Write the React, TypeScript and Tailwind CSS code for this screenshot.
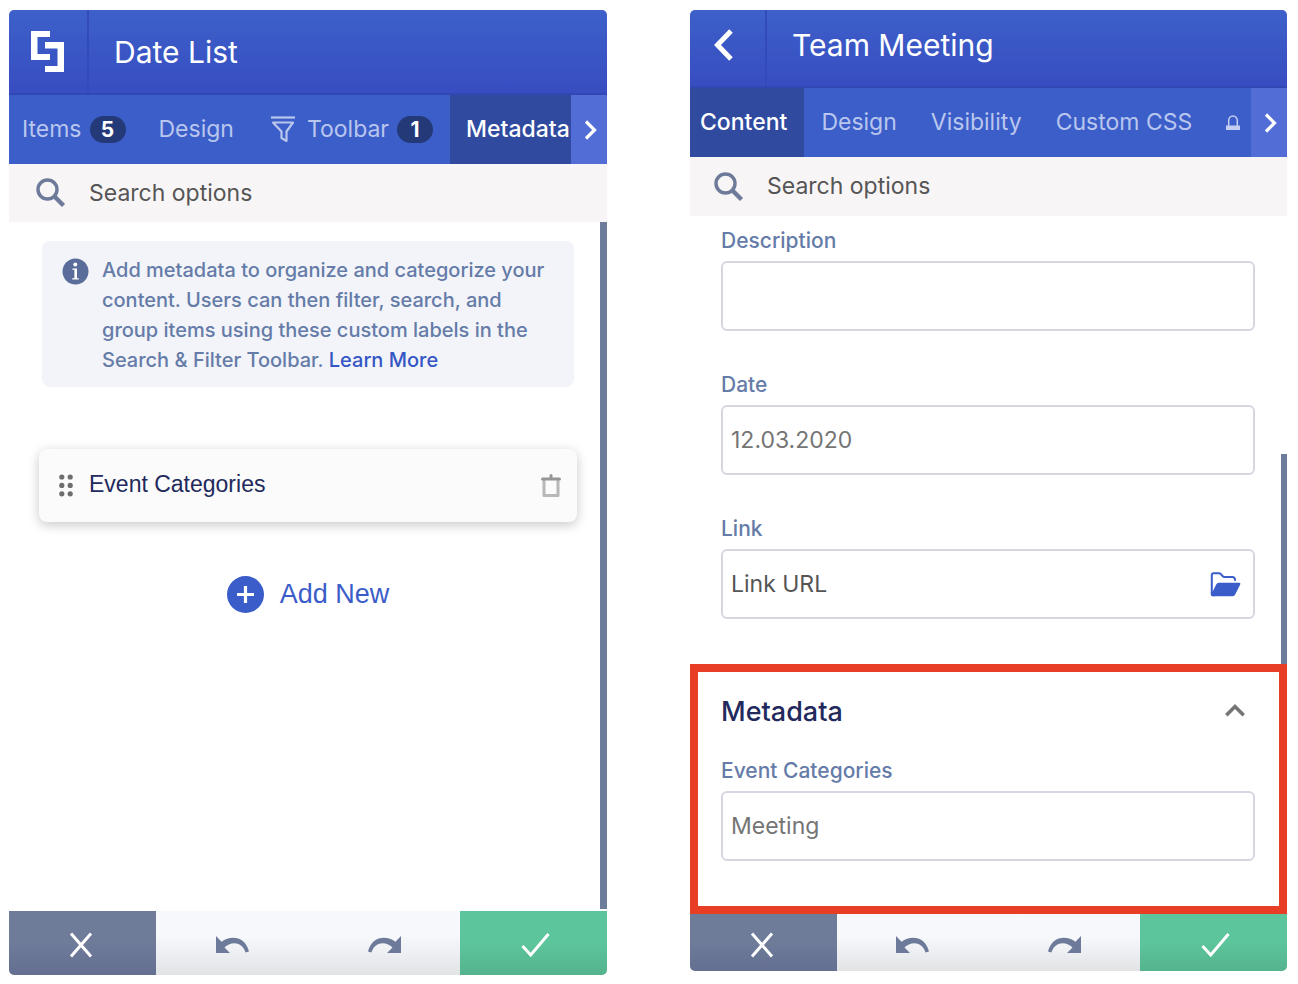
import type { ReactNode } from "react";

function LogoIcon() {
  return (
    <svg width="34" height="42" viewBox="0 0 34 42" fill="#fff" aria-hidden="true">
      <path d="M0 0h19v6H6.500v17H19v6H0z" />
      <path d="M14 11h19v30H14v-6h12.500V17.500H14z" />
    </svg>
  );
}

function BackIcon() {
  return (
    <svg width="20" height="32" viewBox="0 0 20 32" fill="none" stroke="#fff" strokeWidth="5" aria-hidden="true">
      <path d="M17 2 3.500 16 17 30" />
    </svg>
  );
}

function NextIcon() {
  return (
    <svg width="14" height="20" viewBox="0 0 14 20" fill="none" stroke="#fff" strokeWidth="3.200" aria-hidden="true">
      <path d="M2 1.500 10.500 10 2 18.500" />
    </svg>
  );
}

function SearchIcon() {
  return (
    <svg width="30" height="30" viewBox="0 0 30 30" fill="none" stroke="#6d7a99" aria-hidden="true">
      <circle cx="11.500" cy="11.500" r="9.500" strokeWidth="3.400" />
      <path d="M19 19l8.500 8.500" strokeWidth="4.400" />
    </svg>
  );
}

function FilterIcon() {
  return (
    <svg width="24" height="27" viewBox="0 0 24 27" fill="none" stroke="#b9c6ee" strokeWidth="2.200" aria-hidden="true">
      <path d="M0 1.500h24" />
      <path d="M2 6.500h20l-6.500 9v9.500l-5-3V15.500z" strokeLinejoin="round" />
    </svg>
  );
}

function LockIcon() {
  return (
    <svg width="14" height="15" viewBox="0 0 14 15" aria-hidden="true">
      <path d="M2.700 11V5.600a4.300 4.600 0 0 1 8.600 0V11" fill="none" stroke="#c3cef0" strokeWidth="1.500" />
      <path d="M0 10.500h14V15H0z" fill="#c3cef0" />
    </svg>
  );
}

function InfoIcon() {
  return (
    <svg className="shrink-0" width="27" height="27" viewBox="0 0 27 27" aria-hidden="true">
      <circle cx="13.500" cy="13.500" r="13" fill="#5a6c99" />
      <circle cx="13.300" cy="6.600" r="2" fill="#fff" />
      <path d="M10.400 10.500h4.600v9.700h1.800v1.300h-6.600v-1.300h2.200v-8.400h-2z" fill="#fff" />
    </svg>
  );
}

function GripIcon() {
  return (
    <svg width="14" height="23" viewBox="0 0 14 23" fill="#6e6e6e" aria-hidden="true">
      <circle cx="2.800" cy="3" r="2.600" />
      <circle cx="11.200" cy="3" r="2.600" />
      <circle cx="2.800" cy="11.400" r="2.600" />
      <circle cx="11.200" cy="11.400" r="2.600" />
      <circle cx="2.800" cy="19.800" r="2.600" />
      <circle cx="11.200" cy="19.800" r="2.600" />
    </svg>
  );
}

function TrashIcon() {
  return (
    <svg width="20" height="24" viewBox="0 0 20 24" fill="none" aria-hidden="true">
      <path d="M3 6v15.500h14V6" stroke="#b8b8b8" strokeWidth="3" strokeLinejoin="round" />
      <path d="M1.500 5h17M10 1.500V5" stroke="#969696" strokeWidth="3" strokeLinecap="round" />
    </svg>
  );
}

function PlusCircleIcon() {
  return (
    <svg width="37" height="37" viewBox="0 0 37 37" aria-hidden="true">
      <circle cx="18.500" cy="18.500" r="18.500" fill="#3b5dc9" />
      <path d="M18.500 10v17M10 18.500h17" stroke="#fff" strokeWidth="3.200" />
    </svg>
  );
}

function FolderIcon() {
  return (
    <svg width="31" height="25" viewBox="0 0 31 25" aria-hidden="true">
      <path
        d="M1.800 21V3.200q0-1.900 1.900-1.900h5.200q1.200 0 2 .9l1.600 1.800q.8.900 2 .9h8q2.300 0 2.500 2.600v1.300"
        fill="none"
        stroke="#3b5dc9"
        strokeWidth="2"
      />
      <path
        d="M8.600 10.800h20.600q1.800 0 1 1.600l-5 10.200q-.8 1.600-2.600 1.600H3q-2.200 0-1.800-1.600L6.200 12.400q.8-1.600 2.400-1.600z"
        fill="#3b5dc9"
      />
      <path d="M.8 20v2.300q0 1.900 1.900 1.900h2V20z" fill="#3b5dc9" />
    </svg>
  );
}

function ChevronUpIcon() {
  return (
    <svg width="20" height="13" viewBox="0 0 20 13" fill="none" stroke="#757575" strokeWidth="3.600" aria-hidden="true">
      <path d="M1.300 11.300 10 2.600l8.700 8.700" />
    </svg>
  );
}

function CloseIcon() {
  return (
    <svg width="24" height="26" viewBox="0 0 24 26" fill="none" stroke="#fff" strokeWidth="3" aria-hidden="true">
      <path d="M2 1.500l20 23M22 1.500l-20 23" />
    </svg>
  );
}

function UndoIcon() {
  return (
    <svg width="33" height="18" viewBox="0 0 33 18" aria-hidden="true">
      <path d="M0 0v17h14l-5.500-5.500C14 5.500 26 4.500 29.500 16.500l3.500-1C29.500.5 15-1.500 5.500 5.700z" fill="#6d7a99" />
    </svg>
  );
}

function RedoIcon() {
  return (
    <svg width="33" height="18" viewBox="0 0 33 18" aria-hidden="true">
      <path d="M33 0v17H19l5.500-5.500C19 5.500 7 4.500 3.500 16.500l-3.500-1C3.500.5 18-1.500 27.500 5.700z" fill="#6d7a99" />
    </svg>
  );
}

function CheckIcon() {
  return (
    <svg width="29" height="26" viewBox="0 0 29 26" fill="none" stroke="#fff" strokeWidth="3" aria-hidden="true">
      <path d="M1.500 14l8.200 9L27.500 2" />
    </svg>
  );
}

function Badge({ children }: { children: ReactNode }) {
  return (
    <span className="flex h-[27px] w-[36px] items-center justify-center rounded-full bg-[#243a78] text-[21px] font-bold text-white">
      {children}
    </span>
  );
}

function NextTabs() {
  return (
    <button
      type="button"
      aria-label="More tabs"
      className="flex w-9 shrink-0 items-center justify-center bg-[#526dd6] pl-1"
    >
      <NextIcon />
    </button>
  );
}

function SearchBar({ id, compact }: { id: string; compact?: boolean }) {
  return (
    <div
      className={
        compact
          ? "flex h-[59px] items-center gap-[23px] bg-[#f8f5f6] pl-6"
          : "flex h-[58px] items-center gap-[23px] bg-[#f8f5f6] pl-[27px]"
      }
    >
      <label htmlFor={id} aria-label="Search options">
        <SearchIcon />
      </label>
      <input
        id={id}
        type="text"
        placeholder="Search options"
        className="min-w-0 flex-1 bg-transparent text-[23px] text-[#555] outline-none placeholder:text-[#555]"
      />
    </div>
  );
}

function Footer({ compact }: { compact?: boolean }) {
  return (
    <footer
      className={
        compact ? "flex h-[57px] overflow-hidden rounded-b-[5px]" : "flex h-16 overflow-hidden rounded-b-[5px]"
      }
    >
      <button
        type="button"
        aria-label="Cancel"
        className="flex w-[147px] items-center justify-center bg-linear-to-b from-[#6e7b99] from-50% to-[#646f91] pt-1 pr-1"
      >
        <CloseIcon />
      </button>
      <div className="flex flex-1 bg-linear-to-b from-[#f7f8fc] from-40% to-[#e2e3e5] pt-1">
        <button type="button" aria-label="Undo" className="flex flex-1 items-center justify-center">
          <UndoIcon />
        </button>
        <button type="button" aria-label="Redo" className="flex flex-1 items-center justify-center">
          <RedoIcon />
        </button>
      </div>
      <button
        type="button"
        aria-label="Save"
        className="flex w-[147px] items-center justify-center bg-linear-to-b from-[#5cc59b] from-50% to-[#54b38d] pt-1 pl-1"
      >
        <CheckIcon />
      </button>
    </footer>
  );
}

function Field({
  id,
  label,
  placeholder,
  dark,
  action,
}: {
  id: string;
  label: string;
  placeholder?: string;
  dark?: boolean;
  action?: ReactNode;
}) {
  return (
    <div className="flex flex-col gap-[5px]">
      <label htmlFor={id} className="text-[21px] leading-[30px] font-medium text-[#657ba8]">
        {label}
      </label>
      <div className="flex h-[70px] items-center rounded-md border-2 border-[#d6d7e2] bg-white pr-3 pl-2">
        <input
          id={id}
          type="text"
          placeholder={placeholder}
          className={
            dark
              ? "min-w-0 flex-1 text-[23px] text-[#555] outline-none placeholder:text-[#555]"
              : "min-w-0 flex-1 text-[23px] text-[#757575] outline-none placeholder:text-[#757575]"
          }
        />
        {action}
      </div>
    </div>
  );
}

const tabClass = "flex shrink-0 items-center text-[23px] text-[#b9c6ee]";
const activeTabClass = "flex shrink-0 items-center bg-[#2f4a9f] text-[23px] font-medium text-white";

function DateListPanel() {
  return (
    <section aria-label="Date List" className="min-w-0">
      <header className="flex h-[85px] overflow-hidden rounded-t-[5px] border-b-2 border-[#3147b3] bg-linear-to-b from-[#3d60c9] to-[#374dc1]">
        <div className="flex w-20 items-center justify-center border-r-2 border-[#334bb8]">
          <LogoIcon />
        </div>
        <h1 className="flex items-center pt-0.5 pl-[25px] text-[30px] text-white">Date List</h1>
      </header>
      <div className="flex h-[69px] bg-[#3c5ec9]">
        <nav className="flex min-w-0 flex-1 overflow-hidden">
          <button type="button" className={`${tabClass} gap-2 pr-[17px] pl-[13px]`}>
            Items <Badge>5</Badge>
          </button>
          <button type="button" className={`${tabClass} px-4`}>
            Design
          </button>
          <button type="button" className={`${tabClass} gap-2 pr-[17px] pl-[21px]`}>
            <FilterIcon />
            <span className="pl-1">Toolbar</span> <Badge>1</Badge>
          </button>
          <button type="button" className={`${activeTabClass} px-4`}>
            Metadata
          </button>
        </nav>
        <NextTabs />
      </div>
      <SearchBar id="search-list" />
      <div className="flex min-h-[689px]">
        <div className="flex flex-1 flex-col pr-[23px] pl-[30px]">
          <div className="mx-[3px] mt-[19px] flex gap-[13px] rounded-lg bg-[#f2f4f9] pt-[14px] pb-3 pl-5">
            <div className="pt-[3px]">
              <InfoIcon />
            </div>
            <p className="flex-1 text-[20px] leading-[30px] font-medium text-[#657ba8]">
              Add metadata to organize and categorize your
              <br />
              content. Users can then filter, search, and
              <br />
              group items using these custom labels in the
              <br />
              Search &amp; Filter Toolbar.{" "}
              <a href="#learn-more" className="text-[#3556c4]">
                Learn More
              </a>
            </p>
          </div>
          <div className="mt-[62px] flex h-[73px] items-center rounded-lg bg-[#fbfbfb] pr-4 pl-5 shadow-[0_3px_12px_rgba(0,0,0,0.22)]">
            <GripIcon />
            <span className="flex-1 pb-0.5 pl-4 font-['Liberation_Sans',sans-serif] text-[23px] text-[#22295c]">
              Event Categories
            </span>
            <button type="button" aria-label="Delete Event Categories">
              <TrashIcon />
            </button>
          </div>
          <button
            type="button"
            className="mt-[52px] flex items-center gap-4 self-center font-['Liberation_Sans',sans-serif] text-[27px] text-[#3b5dc9]"
          >
            <PlusCircleIcon />
            Add New
          </button>
        </div>
        <div className="mb-0.5 w-[7px] bg-[#6e7c9b]" />
      </div>
      <Footer />
    </section>
  );
}

function TeamMeetingPanel() {
  return (
    <section aria-label="Team Meeting" className="min-w-0">
      <header className="flex h-[78px] overflow-hidden rounded-t-[5px] border-b-2 border-[#3147b3] bg-linear-to-b from-[#3d60c9] to-[#374dc1]">
        <div className="flex w-[77px] items-center border-r-2 border-[#334bb8] pb-1.5 pl-6">
          <button type="button" aria-label="Back">
            <BackIcon />
          </button>
        </div>
        <h1 className="flex items-center pb-1.5 pl-[25px] text-[30px] text-white">Team Meeting</h1>
      </header>
      <div className="flex h-[69px] bg-[#3c5ec9]">
        <nav className="flex min-w-0 flex-1 overflow-hidden">
          <button type="button" className={`${activeTabClass} pr-[17px] pl-[10px]`}>
            Content
          </button>
          <button type="button" className={`${tabClass} px-[17px]`}>
            Design
          </button>
          <button type="button" className={`${tabClass} px-[17px]`}>
            Visibility
          </button>
          <button type="button" className={`${tabClass} gap-[34px] pl-[17px]`}>
            Custom CSS <LockIcon />
          </button>
        </nav>
        <NextTabs />
      </div>
      <SearchBar id="search-item" compact />
      <div className="flex">
        <div className="flex flex-1 flex-col gap-[39px] pt-[10px] pr-[26px] pb-[45px] pl-[31px]">
          <Field id="description" label="Description" />
          <Field id="date" label="Date" placeholder="12.03.2020" />
          <Field
            id="link"
            label="Link"
            placeholder="Link URL"
            dark
            action={
              <button type="button" aria-label="Choose file">
                <FolderIcon />
              </button>
            }
          />
        </div>
        <div className="h-[210px] w-[6px] self-end bg-[#6e7c9b]" />
      </div>
      <div className="border-8 border-[#e83e25] pt-[22px] pr-6 pb-[45px] pl-[23px]">
        <div className="mb-[26px] flex items-center justify-between pr-[10px]">
          <h2 className="text-[27px] leading-9 font-medium text-[#22295c]">Metadata</h2>
          <button type="button" aria-label="Collapse Metadata" className="pb-1">
            <ChevronUpIcon />
          </button>
        </div>
        <Field id="event-categories" label="Event Categories" placeholder="Meeting" />
      </div>
      <Footer compact />
    </section>
  );
}

export default function App() {
  return (
    <main className="grid min-h-screen grid-cols-[598fr_597fr] items-start gap-[83px] bg-white pt-[10px] pr-[11px] pb-[9px] pl-[9px] font-[Inter,sans-serif]">
      <DateListPanel />
      <TeamMeetingPanel />
    </main>
  );
}
